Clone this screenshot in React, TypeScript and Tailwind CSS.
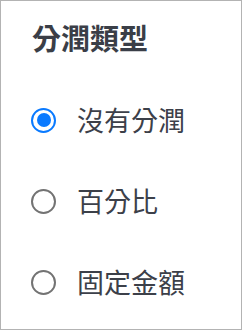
import React from "react";

const options = [
  { label: "沒有分潤", checked: true },
  { label: "百分比", checked: false },
  { label: "固定金額", checked: false },
];

export default function App() {
  return (
    <div
      className="w-[242px] h-[330px] border border-[#b3b3b3] bg-white overflow-hidden"
      style={{ fontFamily: '"Noto Sans CJK TC", "Noto Sans", sans-serif' }}
    >
      <div className="pl-[31px] pt-[18px]">
        <h2 className="text-[29px] leading-[36px] font-bold text-[#3a3e47]">分潤類型</h2>
        <div className="mt-[46px] flex flex-col gap-[43px]">
          {options.map((o) => (
            <label key={o.label} className="flex items-center h-[38px]">
              {o.checked ? (
                <span className="ml-[-1px] w-[25px] h-[25px] rounded-full border-[2.5px] border-[#0a7aff] flex items-center justify-center">
                  <span className="w-[14px] h-[14px] rounded-full bg-[#0a7aff]" />
                </span>
              ) : (
                <span className="ml-[-1px] w-[25px] h-[25px] rounded-full border-2 border-[#737373]" />
              )}
              <span className="ml-[21px] text-[27px] leading-[38px] text-[#3c4049]">{o.label}</span>
            </label>
          ))}
        </div>
      </div>
    </div>
  );
}
